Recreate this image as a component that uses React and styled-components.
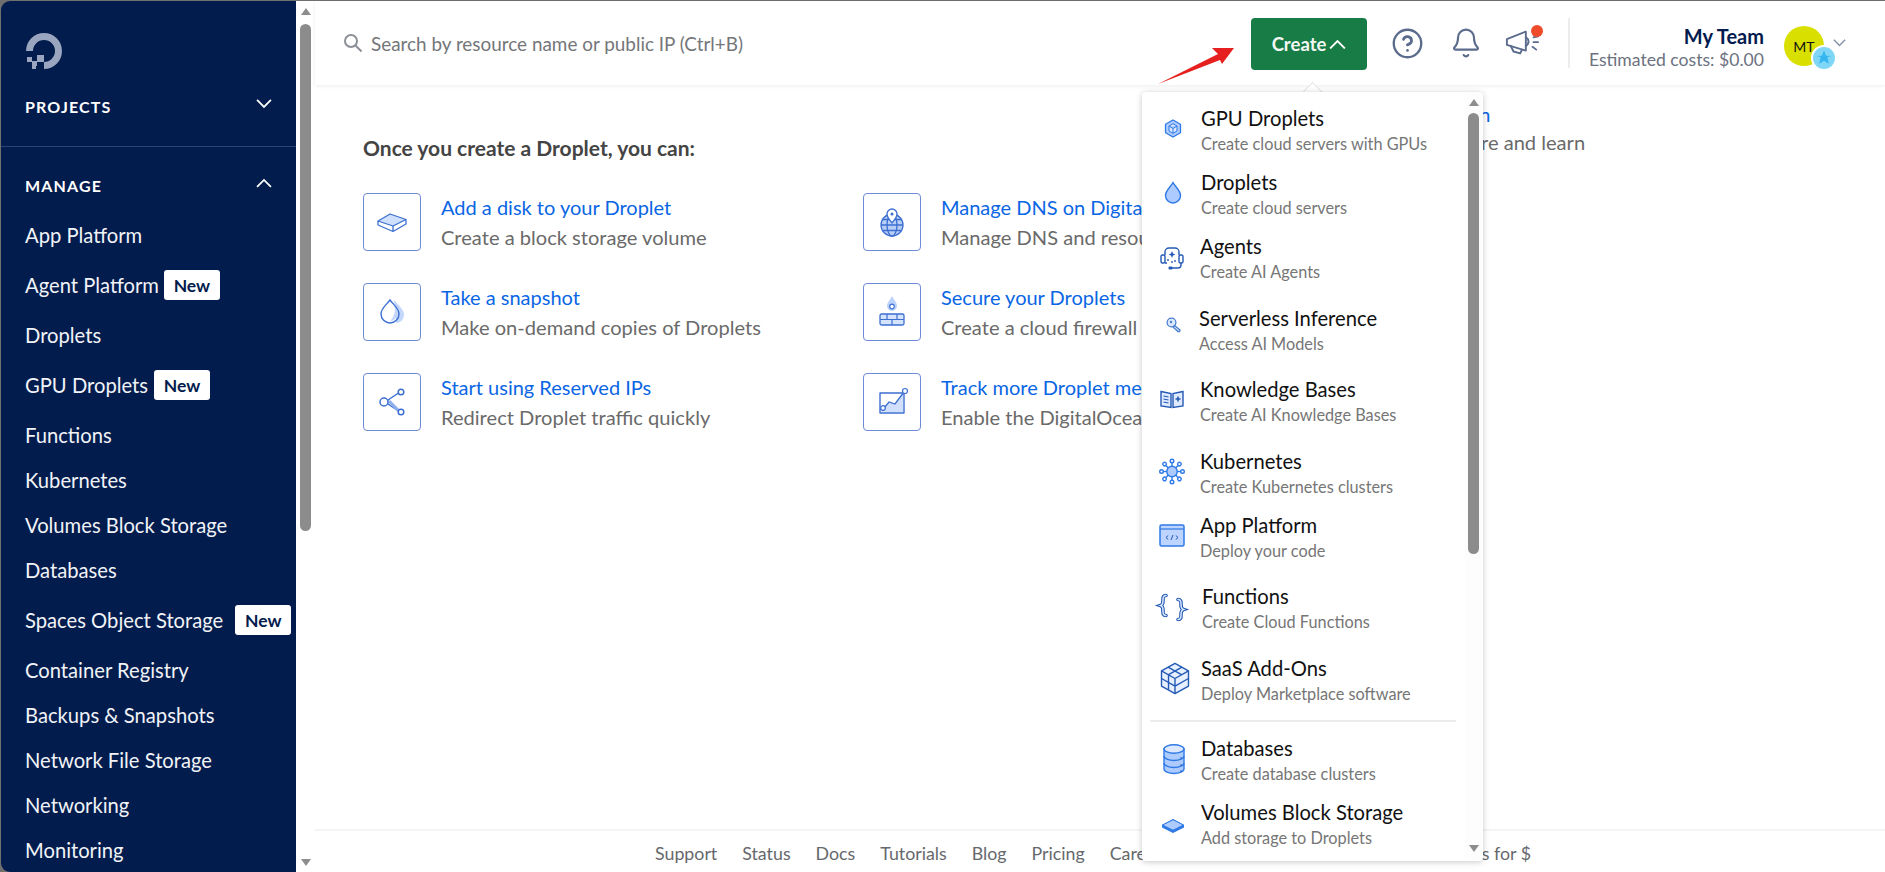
import React from "react";
import styled, { createGlobalStyle } from "styled-components";

const FONT = `Lato, "Open Sans", Arial, sans-serif`;

const GlobalStyle = createGlobalStyle`
  html, body { margin: 0; padding: 0; height: 100%; background: #fff; }
  body { font-family: ${FONT}; -webkit-font-smoothing: antialiased; }
`;

const Page = styled.div`
  position: relative;
  display: flex;
  width: 1885px;
  height: 872px;
  padding: 1px 0 0 1px;
  box-sizing: border-box;
  overflow: hidden;
  background: #6f6f6f;
`;

const Sidebar = styled.nav`
  flex: 0 0 295px;
  background: #021c4d;
  border-radius: 9px 0 0 9px;
  color: #fff;
  overflow: hidden;
`;

const LogoRow = styled.div`
  height: 87px;
  padding: 30px 0 0 24px;
  box-sizing: border-box;
`;

const SectionHead = styled.div`
  display: flex;
  align-items: center;
  justify-content: space-between;
  height: 36px;
  padding: 0 24px;
  font-size: 16px;
  font-weight: 700;
  letter-spacing: 1.15px;

  svg {
    margin-top: -4px;
  }
`;

const SideDivider = styled.div`
  height: 1px;
  margin: 22px 0 20px;
  background: #2c4570;
`;

const NavList = styled.div`
  display: flex;
  flex-direction: column;
  padding: 9.5px 0 0 24px;
`;

const NavItem = styled.div`
  display: flex;
  align-items: center;
  gap: ${({ $gap }) => $gap}px;
  height: ${({ $gap }) => ($gap ? 55 : 45)}px;
  font-size: 20.2px;
  white-space: nowrap;
  color: #f1f3f7;
`;

const NewBadge = styled.span`
  display: inline-flex;
  align-items: center;
  justify-content: center;
  width: 56px;
  height: 30px;
  border-radius: 3px;
  background: #fff;
  color: #021c4d;
  font-size: 17.5px;
  font-weight: 700;
`;

const PageScroll = styled.div`
  flex: 0 0 19px;
  display: flex;
  flex-direction: column;
  align-items: center;
  background: #fff;
  padding: 7px 0 6px;
  box-sizing: border-box;
`;

const ArrowUp = styled.div`
  width: 0;
  height: 0;
  border-left: 5px solid transparent;
  border-right: 5px solid transparent;
  border-bottom: 7px solid #8d8d8d;
`;

const ArrowDown = styled(ArrowUp)`
  border-bottom: 0;
  border-top: 7px solid #8d8d8d;
  margin-top: auto;
`;

const Thumb = styled.div`
  width: 11px;
  height: ${({ $h }) => $h}px;
  margin-top: ${({ $top }) => $top}px;
  border-radius: 6px;
  background: #8c8c8c;
`;

const Main = styled.main`
  flex: 1;
  min-width: 0;
  display: flex;
  flex-direction: column;
  background: #fff;
`;

const Header = styled.header`
  display: flex;
  align-items: center;
  height: 84px;
  flex: 0 0 84px;
  padding-left: 28px;
  box-shadow: 0 1px 4px rgba(0, 0, 0, 0.08);
`;

const SearchLabel = styled.span`
  margin-left: 8px;
  font-size: 18.9px;
  color: #74767a;
`;

const CreateButton = styled.button`
  display: flex;
  align-items: center;
  justify-content: center;
  gap: 3px;
  width: 116px;
  height: 52px;
  margin: 2px 0 0 auto;
  border: 0;
  border-radius: 4px;
  background: #177c45;
  color: #f4f8f5;
  font-family: ${FONT};
  font-size: 18.5px;
  font-weight: 700;
`;

const IconBox = styled.div`
  position: relative;
  display: flex;
  align-items: center;
  justify-content: center;
  width: 36px;
  height: 36px;
  margin-left: ${({ $ml }) => $ml}px;
`;

const Dot = styled.span`
  position: absolute;
  top: 0;
  right: -2px;
  width: 12px;
  height: 12px;
  border-radius: 50%;
  background: #ee4b2b;
`;

const VDivider = styled.div`
  width: 2px;
  height: 50px;
  margin-left: 27px;
  background: #ececee;
`;

const TeamBlock = styled.div`
  flex: 0 0 194px;
  display: flex;
  flex-direction: column;
  align-items: flex-end;
  gap: 0;
  margin-top: 10px;
  text-align: right;
  white-space: nowrap;
`;

const TeamName = styled.div`
  font-size: 20px;
  line-height: 24px;
  font-weight: 700;
  color: #031b4e;
`;

const TeamCost = styled.div`
  font-size: 17.6px;
  line-height: 24px;
  color: #6c7280;
`;

const Avatar = styled.div`
  position: relative;
  display: flex;
  align-items: center;
  justify-content: center;
  flex: 0 0 40px;
  height: 40px;
  margin: 6px 0 0 20px;
  border-radius: 50%;
  background: #d9e000;
  color: #111;
  font-size: 14px;
`;

const AvatarBadge = styled.span`
  position: absolute;
  right: -13px;
  bottom: -5px;
  display: flex;
  align-items: center;
  justify-content: center;
  width: 26px;
  height: 26px;
  border-radius: 50%;
  background: #7fd6f5;
  border: 2px solid #fff;
  box-sizing: border-box;
`;

const HeaderChevron = styled.div`
  display: flex;
  flex: 0 0 auto;
  margin: 0 39px 0 9px;
`;

const Content = styled.div`
  flex: 1;
  display: flex;
  padding: 17px 0 0 48px;
  min-height: 0;
`;

const LeftBlock = styled.section`
  flex: 0 0 1069px;
  padding-top: 34px;
`;

const Heading = styled.h2`
  margin: 0 0 33px;
  font-size: 21px;
  line-height: 24px;
  font-weight: 700;
  color: #444;
`;

const TileGrid = styled.div`
  display: grid;
  grid-template-columns: 500px 500px;
  grid-auto-rows: 90px;
`;

const Tile = styled.div`
  display: flex;
  gap: 20px;
  white-space: nowrap;
`;

const TileIcon = styled.div`
  display: flex;
  align-items: center;
  justify-content: center;
  flex: 0 0 58px;
  height: 58px;
  box-sizing: border-box;
  border: 1.5px solid #6d8bd6;
  border-radius: 4px;
`;

const TileText = styled.div`
  padding-top: 2px;
`;

const LinkTitle = styled.div`
  font-size: 20px;
  line-height: 24px;
  color: #0a66e4;
`;

const LinkSub = styled.div`
  margin-top: 6px;
  font-size: 20.1px;
  line-height: 24px;
  color: #6a6a6a;
`;

const RightBlock = styled.div`
  white-space: nowrap;
`;

const RightTitle = styled(LinkTitle)`
  padding-left: 10px;
`;

const RightSub = styled(LinkSub)`
  margin-top: 4px;
`;

const Footer = styled.footer`
  display: flex;
  align-items: center;
  gap: 25px;
  flex: 0 0 43px;
  box-sizing: border-box;
  padding: 2px 354px 0 340px;
  border-top: 2px solid #f4f4f4;
  font-size: 17.8px;
  color: #66686c;
  white-space: nowrap;
`;

const LastLink = styled.span`
  margin-left: auto;
`;

const ArrowMark = styled.svg`
  position: absolute;
  left: 1150px;
  top: 40px;
`;

const Caret = styled.div`
  position: absolute;
  left: 1305px;
  top: 85px;
  width: 14px;
  height: 14px;
  background: #fff;
  border-top: 1px solid #e2e2e2;
  border-left: 1px solid #e2e2e2;
  transform: rotate(45deg);
`;

const Dropdown = styled.div`
  position: absolute;
  left: 1142px;
  top: 92px;
  display: flex;
  width: 341px;
  height: 769px;
  background: #fff;
  border-radius: 4px;
  box-shadow: 0 1px 6px rgba(0, 0, 0, 0.22);
  overflow: hidden;
`;

const MenuList = styled.div`
  flex: 1;
  min-width: 0;
  padding-top: 14px;
`;

const MenuItem = styled.div`
  display: flex;
  height: 50px;
  margin-top: ${({ $gap }) => $gap}px;
`;

const IconSlot = styled.div`
  display: flex;
  align-items: center;
  justify-content: center;
  flex: 0 0 60px;
  height: 50px;
  margin-right: ${({ $shift }) => $shift}px;
`;

const MenuTitle = styled.div`
  font-size: 20.2px;
  line-height: 25px;
  color: #111;
  white-space: nowrap;
`;

const MenuSub = styled.div`
  font-size: 16.3px;
  line-height: 25px;
  color: #767676;
  white-space: nowrap;
`;

const MenuDivider = styled.div`
  height: 2px;
  margin: 14px 9px 14px 8px;
  background: #ececec;
`;

const MenuScroll = styled.div`
  display: flex;
  flex-direction: column;
  align-items: center;
  flex: 0 0 17px;
  margin-right: 1px;
  padding: 7px 0 9px;
  box-sizing: border-box;
  background: #fdfdfd;
`;

const BLUE = "#2f7ae5";
const DEEP = "#2459b5";
const SOFT = "#aecbff";
const INK = "#5a6b8c";

const Glyph = ({ x = 0, y = 0, s = 1, children }) => (
  <svg width="40" height="40" viewBox="-20 -20 40 40">
    <g transform={`translate(${x} ${y}) scale(${s})`}>{children}</g>
  </svg>
);

const Chevron = ({ up, color = "#fff", size = 16 }) => (
  <svg width={size} height={size * 0.62} viewBox="0 0 16 10" fill="none" stroke={color} strokeWidth="1.8">
    <polyline points={up ? "1,9 8,2 15,9" : "1,1 8,8 15,1"} />
  </svg>
);

const Logo = () => (
  <svg width="38" height="40" viewBox="24 30 38 40" fill="#9aa5bf">
    <path d="M43 68v-7a11 11 0 1 0-11-11h-7a18 18 0 1 1 18 18z" />
    <rect x="36" y="54" width="7" height="7" />
    <rect x="31" y="60" width="5" height="5" />
    <rect x="26" y="56" width="5" height="5" />
    <rect x="31" y="65" width="4" height="3" />
  </svg>
);

const menuIcons = {
  gpu: (
    <Glyph x={1} y={-2.5}>
      <path d="M0-8.500 7.500-4.200v8.400L0 8.500-7.500 4.200v-8.400z" fill={SOFT} stroke={BLUE} strokeWidth="1.300" />
      <path d="M0-4.800 4-2.500v5L0 4.800-4 2.500v-5zM-4-2.500 0 0 4-2.500M0 0v4.800" fill="#dbe8ff" stroke={BLUE} strokeWidth="1" />
    </Glyph>
  ),
  droplet: (
    <Glyph x={1} y={-2}>
      <path d="M0-10.500C2.500-6 7.500-2.500 7.500 2.500a7.500 7.500 0 0 1-15 0C-7.500-2.500-2.500-6 0-10.500z" fill={SOFT} stroke={BLUE} strokeWidth="1.400" />
    </Glyph>
  ),
  agents: (
    <Glyph y={-1}>
      <g fill="none" stroke={DEEP} strokeWidth="1.400">
        <path d="M-7-3v-3a4 4 0 0 1 4-4H3a4 4 0 0 1 4 4v3" />
        <rect x="-11" y="-3" width="4" height="8" rx="1.500" />
        <rect x="7" y="-3" width="4" height="8" rx="1.500" />
        <path d="M9 5v2a3 3 0 0 1-3 3H0" />
        <path d="M-7 5h2" />
      </g>
      <path d="M0-7 1-4.500 3.400-3.500 1-2.500 0 0-1-2.500-3.400-3.500-1-4.500z" fill={DEEP} />
      <rect x="-3.500" y="8.500" width="4" height="3" rx="1.200" fill={DEEP} />
      <circle cx="-4" cy="2" r=".9" fill={DEEP} />
      <circle cx="3" cy="3" r=".9" fill={DEEP} />
      <circle cx="0" cy="4" r=".9" fill={DEEP} />
    </Glyph>
  ),
  key: (
    <Glyph x={2} y={-6}>
      <g fill="#dce8fb" stroke="#4a7fd0" strokeWidth="1.300">
        <circle cx="-2.500" cy="-2.500" r="4.400" />
        <path d="M.5.5 6 5l-.5 1.500L4 6.500-.8 2.200z" />
      </g>
      <circle cx="-3" cy="-3" r="1.200" fill="#4a7fd0" />
    </Glyph>
  ),
  book: (
    <Glyph y={-2.5}>
      <g fill="#dfeaff" stroke={DEEP} strokeWidth="1.400">
        <path d="M-11-8-1-6V8L-11 6.500z" />
        <path d="M11-8 1-6V8L11 6.500z" />
      </g>
      <path d="M-8.500-3.500-3.500-2.500M-8.500-.5-3.500.5M-8.500 2.500-3.500 3.500" stroke={DEEP} strokeWidth="1.200" />
      <path d="M6-3v5M3.500-.5h5" stroke={DEEP} strokeWidth="1.600" />
    </Glyph>
  ),
  k8s: (
    <Glyph y={-2.5}>
      <g stroke={BLUE} strokeWidth="1.400" fill="#fff">
        {[0, 45, 90, 135, 180, 225, 270, 315].map((a) => (
          <g key={a} transform={`rotate(${a})`}>
            <path d="M0-5v-4" />
            <circle cx="0" cy="-10.500" r="1.800" />
          </g>
        ))}
      </g>
      <circle r="5.200" fill={SOFT} stroke={BLUE} strokeWidth="1.400" />
    </Glyph>
  ),
  app: (
    <Glyph y={-2.5}>
      <rect x="-12" y="-10.500" width="24" height="21" rx="1.500" fill="#bcd4ff" stroke={BLUE} strokeWidth="1.500" />
      <path d="M-12-6.500h24" stroke={BLUE} strokeWidth="1.200" />
      <path d="M-3.800 0-6 2-3.800 4M3.800 0 6 2 3.800 4M1-.5-1 4.500" fill="none" stroke={DEEP} strokeWidth="1" />
    </Glyph>
  ),
  braces: (
    <Glyph y={-1.5}>
      <g fill="none" strokeLinecap="round">
        <path d="M-6-12c-3 0-3 2-3 4s.5 5-2.500 6c3 1 2.500 4 2.500 6s0 4 3 4" stroke={DEEP} strokeWidth="3.600" />
        <path d="M6-8c3 0 3 2 3 4s-.5 5 2.500 6c-3 1-2.500 4-2.500 6s0 4-3 4" stroke={DEEP} strokeWidth="3.600" />
        <path d="M-6-12c-3 0-3 2-3 4s.5 5-2.500 6c3 1 2.500 4 2.500 6s0 4 3 4" stroke="#dbe8ff" strokeWidth="1.500" />
        <path d="M6-8c3 0 3 2 3 4s-.5 5 2.500 6c-3 1-2.500 4-2.500 6s0 4-3 4" stroke="#dbe8ff" strokeWidth="1.500" />
      </g>
    </Glyph>
  ),
  saas: (
    <Glyph x={3} y={-2.5} s={1.08}>
      <g fill="#e7f0ff" stroke={DEEP} strokeWidth="1.300" strokeLinejoin="round">
        <path d="M0-14 12.500-7v14L0 14-12.500 7V-7z" />
        <path d="M-12.500-7 0 0 12.500-7M0 0V14M-6.500-10.500 6-3.500M6.500-10.500-6-3.500M-12.500 0 0 7 12.500 0M-6-3.500V10.500" fill="none" />
      </g>
    </Glyph>
  ),
  db: (
    <Glyph x={2} y={-2}>
      <g fill={SOFT} stroke={BLUE} strokeWidth="1.400">
        <path d="M-10-10V10c0 2.500 4.500 4.500 10 4.500S10 12.500 10 10V-10z" />
        <ellipse cx="0" cy="-10" rx="10" ry="4.200" fill="#dbe8ff" />
        <path d="M-10-3c0 2.500 4.500 4.500 10 4.500S10-.5 10-3M-10 4c0 2.500 4.500 4.500 10 4.500S10 6.500 10 4" fill="none" />
      </g>
      <circle cx="7" cy="-1" r=".8" fill={DEEP} />
      <circle cx="7" cy="6" r=".8" fill={DEEP} />
      <circle cx="7" cy="12" r=".8" fill={DEEP} />
    </Glyph>
  ),
  volume: (
    <Glyph x={1} y={-1}>
      <path d="M-11 1V3.500L0 9 11 3.500V1L0-5z" fill={BLUE} />
      <path d="M-10.500 1 0-4.300 10.500 1 0 6.200z" fill={SOFT} stroke={BLUE} strokeWidth="1" />
    </Glyph>
  ),
};

const tileIcons = {
  disk: (
    <Glyph>
      <path d="M-14-1-2-8 14-2.500 1 4z" fill="#cfe0ff" stroke="#3c6fd1" strokeWidth="1.300" strokeLinejoin="round" />
      <path d="M-14-1V3L1 9.500 14 2V-2.500M1 4V9.500" fill="none" stroke="#3c6fd1" strokeWidth="1.300" strokeLinejoin="round" />
    </Glyph>
  ),
  snapshot: (
    <Glyph>
      <path d="M2-12C6-7 12-3 12 3a8 8 0 0 1-8 8z" fill="#c3d7fb" />
      <path d="M-2-12C1-7.500 7-4 7 2a9 9 0 0 1-18 0C-11-4-5-7.500-2-12z" fill="none" stroke="#3c6fd1" strokeWidth="1.400" />
      <path d="M-2 9a7 7 0 0 0 7-7c0-2-1-4-2-5 0 6-3 10-5 12z" fill="#c3d7fb" />
    </Glyph>
  ),
  share: (
    <Glyph>
      <g fill="#fff" stroke="#3c6fd1" strokeWidth="1.500">
        <path d="M-7 0 8-10M-7 0 8 10" fill="none" />
        <path d="M-3-1 6 8 9 10" fill="none" stroke="#8fb0ee" strokeWidth="3" />
        <circle cx="-8" cy="0" r="4" />
        <circle cx="9" cy="-10" r="2.800" />
        <circle cx="9" cy="10" r="2.800" />
      </g>
    </Glyph>
  ),
  globe: (
    <Glyph y={1}>
      <g fill="#b8cef7" stroke="#3c6fd1" strokeWidth="1.300">
        <circle cx="0" cy="2" r="11" />
        <ellipse cx="0" cy="2" rx="5" ry="11" fill="none" />
        <path d="M-11 2h22M-9.500-3.500h19M-9.500 7.500h19" fill="none" />
      </g>
      <path d="M0 0C-2-3-5-5.500-5-9a5 5 0 0 1 10 0C5-5.500 2-3 0 0z" fill="#fff" stroke="#3c6fd1" strokeWidth="1.300" />
      <circle cx="0" cy="-9" r="1.500" fill="#3c6fd1" />
    </Glyph>
  ),
  firewall: (
    <Glyph y={-2}>
      <path d="M0-14C2-10 5-7.500 5-4A5 5 0 0 1-5-4C-5-7.500-2-10 0-14z" fill="#bcd3fb" />
      <circle cx="0" cy="-3.500" r="2.300" fill="#fff" stroke="#3c6fd1" strokeWidth="1.200" />
      <rect x="-12" y="4" width="24" height="11" rx="1.500" fill="#d5e3fc" stroke="#3c6fd1" strokeWidth="1.300" />
      <path d="M-12 9.500H12M-5 4V9.500M5 4V9.500M0 9.500V15" stroke="#3c6fd1" strokeWidth="1.200" />
    </Glyph>
  ),
  chart: (
    <Glyph>
      <path d="M12-9H-12V11H12z" fill="none" stroke="#3c6fd1" strokeWidth="1.400" strokeLinejoin="round" />
      <path d="M-8 6-3 0 3 2 11-10V10H-11z" fill="#c3d7fb" opacity=".8" />
      <path d="M-8 6-3 0 3 2 12-10" fill="none" stroke="#3c6fd1" strokeWidth="1.300" />
      <circle cx="-9" cy="6" r="2.300" fill="#fff" stroke="#3c6fd1" strokeWidth="1.200" />
      <circle cx="13" cy="-11" r="2.500" fill="#fff" stroke="#3c6fd1" strokeWidth="1.200" />
    </Glyph>
  ),
};

const navItems = [
  { label: "App Platform" },
  { label: "Agent Platform", badgeGap: 5 },
  { label: "Droplets" },
  { label: "GPU Droplets", badgeGap: 6 },
  { label: "Functions" },
  { label: "Kubernetes" },
  { label: "Volumes Block Storage" },
  { label: "Databases" },
  { label: "Spaces Object Storage", badgeGap: 12 },
  { label: "Container Registry" },
  { label: "Backups & Snapshots" },
  { label: "Network File Storage" },
  { label: "Networking" },
  { label: "Monitoring" },
];

const tiles = [
  { icon: "disk", title: "Add a disk to your Droplet", sub: "Create a block storage volume" },
  { icon: "globe", title: "Manage DNS on DigitalOcean", sub: "Manage DNS and resources" },
  { icon: "snapshot", title: "Take a snapshot", sub: "Make on-demand copies of Droplets" },
  { icon: "firewall", title: "Secure your Droplets", sub: "Create a cloud firewall" },
  { icon: "share", title: "Start using Reserved IPs", sub: "Redirect Droplet traffic quickly" },
  { icon: "chart", title: "Track more Droplet metrics", sub: "Enable the DigitalOcean agent" },
];

const menuTop = [
  { icon: "gpu", title: "GPU Droplets", sub: "Create cloud servers with GPUs", gap: 0, shift: -1 },
  { icon: "droplet", title: "Droplets", sub: "Create cloud servers", gap: 14, shift: -1 },
  { icon: "agents", title: "Agents", sub: "Create AI Agents", gap: 14, shift: -2 },
  { icon: "key", title: "Serverless Inference", sub: "Access AI Models", gap: 22, shift: -3 },
  { icon: "book", title: "Knowledge Bases", sub: "Create AI Knowledge Bases", gap: 21, shift: -2 },
  { icon: "k8s", title: "Kubernetes", sub: "Create Kubernetes clusters", gap: 22, shift: -2 },
  { icon: "app", title: "App Platform", sub: "Deploy your code", gap: 14, shift: -2 },
  { icon: "braces", title: "Functions", sub: "Create Cloud Functions", gap: 21, shift: 0 },
  { icon: "saas", title: "SaaS Add-Ons", sub: "Deploy Marketplace software", gap: 22, shift: -1 },
];

const menuBottom = [
  { icon: "db", title: "Databases", sub: "Create database clusters", gap: 0, shift: -1 },
  { icon: "volume", title: "Volumes Block Storage", sub: "Add storage to Droplets", gap: 14, shift: -1 },
];

const footerLinks = ["Support", "Status", "Docs", "Tutorials", "Blog", "Pricing", "Careers"];

const CreateMenuItem = ({ icon, title, sub, gap, shift }) => (
  <MenuItem $gap={gap}>
    <IconSlot $shift={shift}>{menuIcons[icon]}</IconSlot>
    <div>
      <MenuTitle>{title}</MenuTitle>
      <MenuSub>{sub}</MenuSub>
    </div>
  </MenuItem>
);

export default function App() {
  return (
    <Page>
      <GlobalStyle />
      <Sidebar>
        <LogoRow>
          <Logo />
        </LogoRow>
        <SectionHead>
          PROJECTS
          <Chevron />
        </SectionHead>
        <SideDivider />
        <SectionHead>
          MANAGE
          <Chevron up />
        </SectionHead>
        <NavList>
          {navItems.map((item) => (
            <NavItem key={item.label} $gap={item.badgeGap}>
              {item.label}
              {item.badgeGap && <NewBadge>New</NewBadge>}
            </NavItem>
          ))}
        </NavList>
      </Sidebar>

      <PageScroll>
        <ArrowUp />
        <Thumb $top={9} $h={507} />
        <ArrowDown />
      </PageScroll>

      <Main>
        <Header>
          <svg width="20" height="20" viewBox="0 0 20 20" fill="none" stroke="#8b8f96" strokeWidth="2">
            <circle cx="8" cy="8" r="6" />
            <path d="m12.500 12.500 6 6" />
          </svg>
          <SearchLabel>Search by resource name or public IP (Ctrl+B)</SearchLabel>
          <CreateButton>
            Create
            <Chevron up size={17} />
          </CreateButton>
          <IconBox $ml={22}>
            <svg width="33" height="33" viewBox="0 0 24 24" fill="none" stroke={INK} strokeWidth="1.700" strokeLinecap="round">
              <circle cx="12" cy="12" r="10" />
              <path d="M9.090 9a3 3 0 0 1 5.830 1c0 2-3 3-3 3M12 17h.01" strokeWidth="2" />
            </svg>
          </IconBox>
          <IconBox $ml={23}>
            <svg width="32" height="34" viewBox="0 0 24 24" fill="none" stroke={INK} strokeWidth="1.600" strokeLinecap="round">
              <path d="M10.268 21a2 2 0 0 0 3.464 0" />
              <path d="M3.262 15.326A1 1 0 0 0 4 17h16a1 1 0 0 0 .74-1.673C19.410 13.956 18 12.499 18 8A6 6 0 0 0 6 8c0 4.499-1.411 5.956-2.738 7.326" />
            </svg>
          </IconBox>
          <IconBox $ml={21}>
            <svg width="38" height="30" viewBox="0 0 38 30" fill="none" stroke={INK} strokeWidth="2" strokeLinejoin="round" strokeLinecap="round">
              <path d="M2 11 22 3v20L2 17z" />
              <path d="M22 9a5 5 0 0 1 0 9" />
              <path d="M6 18l3 6 7 2 2-4" />
              <path d="M30 9l5-1M30 14h5M29 19l4 3" strokeWidth="1.800" />
            </svg>
            <Dot />
          </IconBox>
          <VDivider />
          <TeamBlock>
            <TeamName>My Team</TeamName>
            <TeamCost>Estimated costs: $0.00</TeamCost>
          </TeamBlock>
          <Avatar>
            MT
            <AvatarBadge>
              <svg width="16" height="16" viewBox="-7 -7 14 14" fill="#35b6ee">
                <path d="M0-6.500 1.800-2 6.500-1.700 3-.8 4.200 5 0 2.500-4.200 5-3-.8-6.500-1.700-1.800-2z" />
              </svg>
            </AvatarBadge>
          </Avatar>
          <HeaderChevron>
            <Chevron color="#8792a8" size={13} />
          </HeaderChevron>
        </Header>

        <Content>
          <LeftBlock>
            <Heading>Once you create a Droplet, you can:</Heading>
            <TileGrid>
              {tiles.map((tile) => (
                <Tile key={tile.title}>
                  <TileIcon>{tileIcons[tile.icon]}</TileIcon>
                  <TileText>
                    <LinkTitle>{tile.title}</LinkTitle>
                    <LinkSub>{tile.sub}</LinkSub>
                  </TileText>
                </Tile>
              ))}
            </TileGrid>
          </LeftBlock>
          <RightBlock>
            <RightTitle>Learn</RightTitle>
            <RightSub>Explore and learn</RightSub>
          </RightBlock>
        </Content>

        <Footer>
          {footerLinks.map((link) => (
            <span key={link}>{link}</span>
          ))}
          <LastLink>Write Docs for $</LastLink>
        </Footer>
      </Main>

      <ArrowMark width="90" height="50" viewBox="1150 40 90 50">
        <polygon points="1158,84 1218,54 1212,48 1234,48 1222,64 1220,60" fill="#e5201e" />
      </ArrowMark>

      <Caret />
      <Dropdown>
        <MenuList>
          {menuTop.map((item) => (
            <CreateMenuItem key={item.title} {...item} />
          ))}
          <MenuDivider />
          {menuBottom.map((item) => (
            <CreateMenuItem key={item.title} {...item} />
          ))}
        </MenuList>
        <MenuScroll>
          <ArrowUp />
          <Thumb $top={7} $h={441} />
          <ArrowDown />
        </MenuScroll>
      </Dropdown>
    </Page>
  );
}
